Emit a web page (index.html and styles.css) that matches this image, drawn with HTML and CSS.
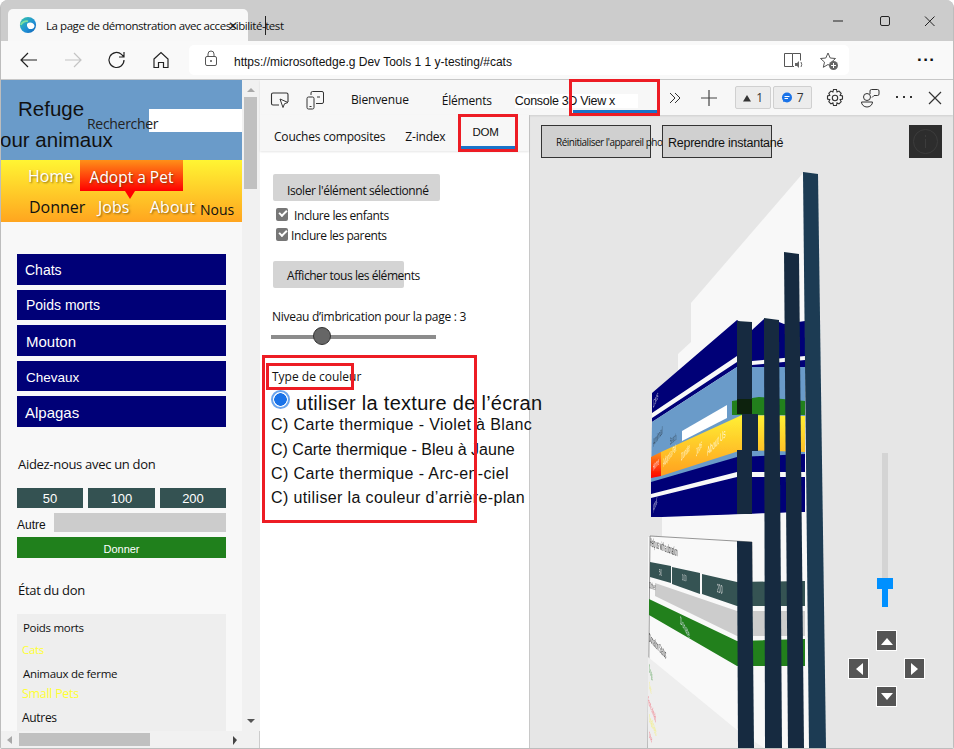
FILE: index.html
```html
<!DOCTYPE html>
<html lang="fr">
<head>
<meta charset="utf-8">
<title>3D View</title>
<link rel="stylesheet" href="styles.css">
</head>
<body>
<div class="window">
  <div class="tabstrip">
    <div class="tab">
      <svg class="edge" viewBox="0 0 20 20" width="18" height="18"><defs><linearGradient id="eg" x1="0" y1="0" x2="1" y2="1"><stop offset="0" stop-color="#37c6a8"/><stop offset="0.6" stop-color="#1f8fd6"/><stop offset="1" stop-color="#0f5fb0"/></linearGradient></defs><circle cx="10" cy="10" r="9" fill="url(#eg)"/><path d="M9 8.500c3-2.500 7-1 8 1.500 1 3-2 5-4.500 4.500-3-.5-4-3.500-3.500-6z" fill="#fff"/><path d="M2 10c1-3 5-5 8-4" stroke="#7fe0a0" stroke-width="2" fill="none"/></svg>
      <span class="tab-title">La page de démonstration avec accessibilité-test</span>
      <span class="tab-close">✕</span>
    </div>
    <i class="tab-caret"></i>
    <div class="win-controls">
      <svg viewBox="0 0 120 20" width="120" height="20"><path d="M1 11h10" stroke="#222" fill="none"/><rect x="48.500" y="6.500" width="9" height="9" rx="1.500" stroke="#222" fill="none"/><path d="M93 6.500l9.500 9.500M102.500 6.500l-9.500 9.500" stroke="#222" fill="none"/></svg>
    </div>
  </div>
  <div class="toolbar">
    <button class="tb-btn tb-back"><svg viewBox="0 0 20 20" width="20" height="20"><path d="M18 10H2M9 3l-7 7 7 7" stroke="#222" stroke-width="1.200" fill="none"/></svg></button>
    <button class="tb-btn"><svg viewBox="0 0 20 20" width="20" height="20"><path d="M2 10h16M11 3l7 7-7 7" stroke="#c4c4c4" stroke-width="1.200" fill="none"/></svg></button>
    <button class="tb-btn"><svg viewBox="0 0 20 20" width="20" height="20"><path d="M17 10a7.500 7.500 0 1 1-2.500-5.600L17 7M17 2v5h-5" stroke="#222" stroke-width="1.200" fill="none"/></svg></button>
    <button class="tb-btn"><svg viewBox="0 0 20 20" width="20" height="20"><path d="M3 9l7-6.500L17 9v8.500h-4.500v-5h-5v5H3z" stroke="#222" stroke-width="1.200" fill="none"/></svg></button>
    <div class="address">
      <svg class="lock" viewBox="0 0 16 16" width="16" height="16"><rect x="2.500" y="6.500" width="11" height="9" rx="1.500" stroke="#555" fill="none"/><path d="M5 6.500V4a3 3 0 0 1 6 0v2.500" stroke="#555" fill="none"/><circle cx="8" cy="11" r="1" fill="#555"/></svg>
      <span class="url">https://microsoftedge.g Dev Tools 1 1 y-testing/#cats</span>
      <svg class="read" viewBox="0 0 20 18" width="20" height="18"><path d="M9.500 1.500h-8v13h8zM9.500 1.500h8v7M11 14.500h-1.500" stroke="#555" fill="none"/><path d="M12 11h2l2-2v7l-2-2h-2z" fill="#666"/><path d="M18 10q1.500 2.500 0 5" stroke="#666" fill="none"/></svg>
      <svg class="fav" viewBox="0 0 20 20" width="20" height="20"><path d="M9 2l2.200 5 5.300.5-4 3.600 1.200 5.200L9 13.500l-4.700 2.800 1.200-5.200-4-3.600 5.300-.5z" stroke="#555" fill="none"/><circle cx="14.500" cy="14.500" r="4.500" fill="#666"/><path d="M14.500 12v5M12 14.500h5" stroke="#fff"/></svg>
    </div>
    <span class="tb-more">···</span>
  </div>

  <div class="content">
    <div class="page">
      <div class="page-view">
        <header class="site-head">
          <h1 class="site-title"><span class="t1">Refuge</span><span class="t2">our animaux</span></h1>
          <div class="search"><label class="search-label">Rechercher</label><span class="search-box"></span></div>
        </header>
        <nav class="site-nav">
          <div class="nav-row"><a class="nl home">Home</a><a class="nl adopt">Adopt a Pet</a></div>
          <div class="nav-row row2"><a class="nl dark donner">Donner</a><a class="nl jobs">Jobs</a><a class="nl about">About</a><a class="nl dark nous">Nous</a></div>
        </nav>
        <aside class="sidebar">
          <ul class="menu">
            <li class="m-a">Chats</li>
            <li class="m-b">Poids morts</li>
            <li class="m-c">Mouton</li>
            <li class="m-d">Chevaux</li>
            <li class="m-e">Alpagas</li>
          </ul>
          <h2 class="help">Aidez-nous avec un don</h2>
          <div class="amounts"><span>50</span><span>100</span><span>200</span></div>
          <div class="other"><span>Autre</span><i></i></div>
          <div class="donate">Donner</div>
          <h2 class="status">État du don</h2>
          <div class="stats">
            <p class="s1">Poids morts</p>
            <p class="s2">Cats</p>
            <p class="s3">Animaux de ferme</p>
            <p class="s4">Small Pets</p>
            <p class="s5">Autres</p>
          </div>
        </aside>
      </div>
      <div class="vscroll"><svg viewBox="0 0 18 651" width="18" height="651"><path d="M9 8l4 4H5z" fill="#a8a8a8"/><rect x="2" y="17" width="13" height="92" fill="#c0c0c0"/><path d="M5 639h8l-4 4z" fill="#555"/></svg></div>
      <div class="hscroll"><svg viewBox="0 0 242 18" width="242" height="18"><path d="M6 9l5-4v8z" fill="#a8a8a8"/><rect x="18" y="2" width="131" height="13" fill="#c0c0c0"/><path d="M236 9l-4-4v9z" fill="#444"/></svg></div>
    </div>

    <div class="devtools">
      <div class="dt-tabs">
        <svg class="dt-i1" viewBox="0 0 20 20" width="20" height="20"><path d="M9 15H3a1.500 1.500 0 0 1-1.500-1.500v-9A1.500 1.500 0 0 1 3 3h13.500A1.500 1.500 0 0 1 18 4.500V12" stroke="#333" stroke-width="1.100" fill="none"/><path d="M10 9l8 3.500-3.500 1.200-1.500 3.800z" fill="#fff" stroke="#333"/></svg>
        <svg class="dt-i2" viewBox="0 0 20 20" width="20" height="20"><rect x="2" y="7" width="7" height="12" rx="1.500" stroke="#333" fill="none"/><path d="M6 5V3a1.500 1.500 0 0 1 1.500-1.500H17A1.500 1.500 0 0 1 18.500 3v9a1.500 1.500 0 0 1-1.500 1.500h-6M12 7h3" stroke="#333" fill="none"/><path d="M4.500 16.500h2" stroke="#333"/></svg>
        <span class="dt-t bien">Bienvenue</span>
        <span class="dt-t elem">Éléments</span>
        <span class="dt-t cons">Console 3D View x</span>
        <svg class="dt-chev" viewBox="0 0 14 14" width="14" height="14"><path d="M2 2l5 5-5 5M7 2l5 5-5 5" stroke="#333" fill="none"/></svg>
        <svg class="dt-plus" viewBox="0 0 18 18" width="18" height="18"><path d="M9 1v16M1 9h16" stroke="#444" stroke-width="1.200"/></svg>
        <span class="badge b1"><svg viewBox="0 0 10 10" width="10" height="10"><path d="M5 2l4 6.500H1z" fill="#333"/></svg>1</span>
        <span class="badge b2"><svg viewBox="0 0 12 12" width="12" height="12"><circle cx="6" cy="5.500" r="5" fill="#1a73e8"/><path d="M2 10l1-3 2 2z" fill="#1a73e8"/><path d="M3.500 4.500h5M3.500 6.500h3.500" stroke="#fff"/></svg>7</span>
        <svg class="dt-gear" viewBox="0 0 20 20" width="20" height="20"><path d="M8.500 1.500h3l.5 2.500 2-.9 2.200 2.200-1.100 2 2.400.7v3l-2.400.7 1.100 2-2.200 2.200-2-1-.5 2.600h-3l-.6-2.600-2 1-2.100-2.200 1-2-2.300-.7V8l2.300-.7-1-2 2.100-2.200 2 .9z" stroke="#333" stroke-width="1.100" fill="none"/><circle cx="10" cy="10" r="2.700" stroke="#333" stroke-width="1.100" fill="none"/></svg>
        <svg class="dt-ppl" viewBox="0 0 20 20" width="20" height="20"><circle cx="7" cy="9" r="3.500" stroke="#333" fill="none"/><path d="M1.500 14h11a5.500 5 0 0 1-11 0z" stroke="#333" fill="none"/><path d="M10 6V3a1.500 1.500 0 0 1 1.500-1.500h6A1.500 1.500 0 0 1 19 3v3a1.500 1.500 0 0 1-1.500 1.500H14l-2 2" stroke="#333" fill="none"/></svg>
        <svg class="dt-dots" viewBox="0 0 18 4" width="18" height="4"><path d="M1 1h2M8 1h2M15 1h2" stroke="#333" stroke-width="2"/></svg>
        <svg class="dt-x" viewBox="0 0 14 14" width="14" height="14"><path d="M1 1l12 12M13 1L1 13" stroke="#333" stroke-width="1.200"/></svg>
      </div>
      <div class="dt-body">
        <section class="panel">
          <div class="subtabs">
            <span class="st st1">Couches composites</span>
            <span class="st st2">Z-index</span>
            <span class="st st3">DOM</span>
          </div>
          <div class="panel-body">
            <button class="pbtn isolate">Isoler l'élément sélectionné</button>
            <label class="chk c1"><i class="cb"></i><span>Inclure les enfants</span></label>
            <label class="chk c2"><i class="cb"></i><span>Inclure les parents</span></label>
            <button class="pbtn showall">Afficher tous les éléments</button>
            <div class="nest">Niveau d’imbrication pour la page : 3</div>
            <div class="range"><i></i></div>
            <div class="ctype">Type de couleur</div>
            <div class="radio r0"><i></i><span>utiliser la texture de l’écran</span></div>
            <div class="radio r1">C) Carte thermique - Violet à Blanc</div>
            <div class="radio r2">C) Carte thermique - Bleu à Jaune</div>
            <div class="radio r3">C) Carte thermique - Arc-en-ciel</div>
            <div class="radio r4">C) utiliser la couleur d’arrière-plan</div>
          </div>
        </section>
        <section class="stage">
          <svg class="scene" viewBox="530 116 424 633" width="424" height="633">
            <defs>
              <linearGradient id="yg" x1="0" y1="0" x2="0" y2="1"><stop offset="0" stop-color="#fff033"/><stop offset="1" stop-color="#ffa020"/></linearGradient>
              <linearGradient id="rg" x1="0" y1="0" x2="0" y2="1"><stop offset="0" stop-color="#ff9018"/><stop offset="1" stop-color="#f00"/></linearGradient>
              <filter id="sf"><feGaussianBlur stdDeviation="0.350"/></filter>
            </defs>
            <g filter="url(#sf)">
              <polygon points="805,173 692,304 692,343 679,355 679,400 664,420 663,537 649,538 649,749 812,749 806,380" fill="#f8f8f8"/>
              <polygon points="653,394 738,321 753,331 765,320 780,323 785,325 806,322 806,368 738,368 653,423" fill="#000077"/>
              <polygon points="653,414 738,357 753,362 806,357 806,361 753,366 738,363 653,419" fill="#f8f8f8"/>
              <polygon points="653,423 738,368 806,368 806,460 652,484" fill="#6a9bc9"/>
              <polygon points="733,402 760,398 806,402 806,416 733,416" fill="#20801c"/>
              <polygon points="683,432 728,406 728,419 683,442" fill="#fff"/>
              <polygon points="662,453 743,416 806,417 806,453 743,451 662,477" fill="url(#yg)"/>
              <polygon points="652,458 662,453 662,477 652,479" fill="url(#rg)"/>
              <polygon points="652,483 738,458 806,455 806,513 680,518 652,518" fill="#000077"/>
              <polygon points="652,495 738,473 806,473 806,478 738,478 652,499" fill="#f8f8f8"/>
              <polygon points="663,518 806,513 812,749 663,749" fill="#f8f8f8"/>
              <polygon points="651,537 753,543 753,749 649,749" fill="#f9f9f9" stroke="#333" stroke-width="0.500"/>
              <polygon points="651,563 672,567 672,584 651,578" fill="#345252"/>
              <polygon points="673,568 701,574 701,595 673,585" fill="#345252"/>
              <polygon points="703,575 738,583 806,582 806,607 738,607 703,595" fill="#345252"/>
              <polygon points="656,584 738,612 806,612 806,637 738,637 656,597" fill="#ccc"/>
              <polygon points="650,600 738,642 806,640 806,667 738,667 650,616" fill="#20801c"/>
              <polygon points="649,658 738,731 765,749 649,749" fill="#eee"/>
              <text class="t3d" transform="matrix(0.23,-0.5,0,1,654,410)" fill="#ccd">Cats</text>
              <text class="t3d" transform="matrix(0.28,-0.4,0,1,654,448)" fill="#345">Animal</text>
              <text class="t3d" transform="matrix(0.18,-0.15,0,0.9,671,446)" fill="#345">Search</text>
              <text class="t3d" transform="matrix(0.2,-0.24,0,0.9,654,472)" fill="#fdd">Home</text>
              <text class="t3d" transform="matrix(0.23,-0.28,0,1,664,468)" fill="#fff6d0">Adopt a Pet</text>
              <text class="t3d" transform="matrix(0.25,-0.3,0,1,682,462)" fill="#fff6d0">Donate</text>
              <text class="t3d" transform="matrix(0.25,-0.45,0,1,697,458)" fill="#fff6d0">Jobs</text>
              <text class="t3d" transform="matrix(0.41,-0.43,0,1.100,708,457)" fill="#fff6d0">About Us</text>
              <text class="t3d" transform="matrix(0.15,-0.36,0,1,654,514)" fill="#dde">About</text>
              <text class="t3d" transform="matrix(0.24,0.09,0,1.100,651,547)" fill="#222">Help us with a donation</text>
              <text class="t3d s" transform="matrix(0.3,0.1,0,1,660,576)" fill="#ddd">50</text>
              <text class="t3d s" transform="matrix(0.3,0.1,0,1,683,581)" fill="#ddd">100</text>
              <text class="t3d" transform="matrix(0.3,0.1,0,1.100,718,593)" fill="#ddd">200</text>
              <text class="t3d s" transform="matrix(0.3,0.1,0,1,650,589)" fill="#444">Other</text>
              <text class="t3d" transform="matrix(0.27,0.45,0,1,681,624)" fill="#dde">Donate</text>
              <text class="t3d" transform="matrix(0.22,0.23,0,1.100,650,642)" fill="#222">Donation Status</text>
              <text class="t3d" transform="matrix(0.14,0.4,0,1,650,672)" fill="#4a9a4a">Dogs</text>
              <text class="t3d s" transform="matrix(0.12,0.4,0,1,650,688)" fill="#f4f06a">Cats</text>
              <text class="t3d" transform="matrix(0.12,0.3,0,1,649,704)" fill="#f06070">Farm animals</text>
              <text class="t3d" transform="matrix(0.14,0.3,0,1,650,722)" fill="#f4f06a">Small Pets</text>
              <text class="t3d s" transform="matrix(0.14,0.3,0,1,650,738)" fill="#f06070">Other</text>
              <polygon points="738,322 753,323 753,400 738,400" fill="#162c40"/>
              <rect x="738" y="400" width="15" height="15" fill="#0a2010"/>
              <polygon points="743,415 759,415 759,452 753,452 753,515 738,515 738,451 743,451" fill="#162c40"/>
              <polygon points="738,542 753,543 755,749 739,749" fill="#162c40"/>
              <polygon points="765,319 780,321 783,749 766,749" fill="#162c40"/>
              <polygon points="785,253 800,255 805,749 789,749" fill="#162c40"/>
              <polygon points="804,173 819,175 827,749 810,749" fill="#1a3a52"/>
            </g>
          </svg>
          <div class="stage-top">
            <button class="sbtn reset"><span>Réinitialiser l'appareil photo</span></button>
            <button class="sbtn snap"><span>Reprendre instantané</span></button>
            <div class="info"><svg viewBox="0 0 33 33" width="33" height="33"><circle cx="16.500" cy="16.500" r="12" stroke="#3c3c3c" fill="none"/><path d="M16.500 14v9M16.500 10v2" stroke="#3c3c3c"/></svg></div>
          </div>
          <div class="zoomer"><div class="ztrack"></div><div class="zthumb"></div><div class="zfill"></div></div>
          <div class="pad">
            <span class="pb up"><svg viewBox="0 0 20 20" width="20" height="20"><path d="M4 14l6-7 6 7z" fill="#fff"/></svg></span>
            <span class="pb left"><svg viewBox="0 0 20 20" width="20" height="20"><path d="M14 4l-7 6 7 6z" fill="#fff"/></svg></span>
            <span class="pb right"><svg viewBox="0 0 20 20" width="20" height="20"><path d="M6 4l7 6-7 6z" fill="#fff"/></svg></span>
            <span class="pb down"><svg viewBox="0 0 20 20" width="20" height="20"><path d="M4 6l6 7 6-7z" fill="#fff"/></svg></span>
          </div>
        </section>
      </div>
      <i class="hl hl-view"></i>
      <i class="hl hl-dom"></i>
      <i class="hl hl-group"></i>
      <i class="hl hl-type"></i>
    </div>
  </div>
</div>
</body>
</html>
```

FILE: styles.css
```css
* { box-sizing: border-box; }
html, body { margin: 0; height: 100%; background: #fff; overflow: hidden; }
body { font-family: "Liberation Sans", Arial, sans-serif; color: #111; }
button { font: inherit; border: 0; padding: 0; background: none; color: inherit; }
p, h1, h2, ul { margin: 0; padding: 0; }

.window { width: 954px; height: 749px; display: flex; flex-direction: column; border: 1px solid #bdbdbd; border-top: 0; border-radius: 8px 8px 2px 2px; overflow: hidden; background: #ccc; }

/* tab strip */
.tabstrip { height: 41px; flex: none; display: flex; background: #ccc; padding: 9px 0 0 7px; position: relative; }
.tab { width: 240px; height: 32px; background: #f8f8f8; border-radius: 5px 5px 0 0; display: flex; align-items: center; padding-left: 11px; position: relative; font-family: "Open Sans", sans-serif; white-space: nowrap; }
.edge { flex: none; }
.tab-title { font-size: 11.500px; margin-left: 9px; letter-spacing: -0.440px; width: 0; color: #111; }
.tab-close { position: absolute; left: 220px; top: 8px; font-size: 12px; color: #222; }
.tab-caret { width: 1px; height: 19px; background: #222; margin: 7px 0 0 17px; flex: none; }
.win-controls { margin-left: auto; margin-right: 1px; margin-top: 1px; }

/* toolbar */
.toolbar { height: 39px; flex: none; background: #f9f9f9; border-bottom: 1px solid #c8c8c8; display: flex; align-items: center; padding: 0 0 1px 18px; }
.tb-btn { width: 44px; height: 24px; display: flex; align-items: center; padding-left: 0; flex: none; }
.tb-back { width: 44px; }
.address { width: 660px; height: 30px; margin-left: -6px; background: #fff; border-radius: 5px; display: flex; align-items: center; padding-left: 14px; position: relative; flex: none; }
.url { font-size: 12px; margin-left: 15px; margin-top: 5px; }
.read { margin-left: auto; margin-right: -3px; margin-top: 2px; }
.fav { margin-left: 19px; margin-right: 10px; margin-top: 2px; }
.lock { flex: none; margin-top: -3px; }
.tb-more { font-size: 17px; font-weight: 700; margin-left: 68px; letter-spacing: 0.500px; line-height: 1; }

/* content */
.content { flex: 1; display: flex; min-height: 0; }
.page { width: 259px; flex: none; display: grid; grid-template-columns: 241px 18px; grid-template-rows: 651px 18px; background: #f1f1f1; border-right: 1px solid #ccc; }
.page-view { overflow: hidden; background: #f8f8f8; }
.vscroll { background: #f1f1f1; line-height: 0; }
.hscroll { background: #f1f1f1; line-height: 0; }

.site-head { height: 80px; background: #6a9bc9; display: grid; position: relative; }
.site-title { grid-area: 1 / 1; font-weight: 400; font-size: 20.500px; line-height: 32px; padding-top: 13px; }
.t1 { display: block; padding-left: 17px; }
.t2 { display: block; margin-left: -1px; margin-top: -1px; }
.search { grid-area: 1 / 1; display: flex; margin: 29px 0 0 86px; height: 23px; font-size: 15px; }
.search-label { line-height: 29px; width: 62px; white-space: nowrap; font-family: "Open Sans", sans-serif; font-size: 14px; letter-spacing: -0.300px; position: relative; z-index: 1; color: #222; }
.search-box { flex: 1; background: #fff; }

.site-nav { height: 62px; background: linear-gradient(#fff533, #ffa51f); font-size: 16px; font-family: "Open Sans", sans-serif; position: relative; }
.nav-row { display: flex; height: 31px; }
.nl { color: #fff; text-shadow: 1px 1px 2px rgba(90,60,0,.7); line-height: 33px; }
.home { margin-left: 27px; width: 52px; }
.adopt { width: 103px; background: linear-gradient(#ff9018, #f00); text-align: center; line-height: 34px; position: relative; font-size: 15.500px; }
.adopt::after { content: ""; position: absolute; left: 45px; top: 31px; border: 5px solid transparent; border-top: 8px solid #f00; border-bottom: 0; }
.row2 { font-size: 16px; }
.dark { color: #111; text-shadow: none; }
.row2 .nl { line-height: 33px; }
.donner { margin-left: 28px; width: 69px; }
.jobs { width: 52px; }
.about { width: 50px; }
.row2 .nous { font-size: 14px; line-height: 37px; }

.sidebar { padding: 32px 16px 0; }
.menu { list-style: none; height: 173px; display: flex; flex-direction: column; gap: 5px; }
.menu li { background: #000077; color: #fff; padding-left: 9px; display: flex; align-items: center; }
.m-a { height: 31px; font-size: 14px; padding-left: 8px !important; }
.m-b { height: 30px; font-size: 14px; padding-bottom: 1px; }
.m-c { height: 31px; font-size: 15px; padding-top: 2px; }
.m-d { height: 30px; font-size: 13.500px; padding-top: 2px; }
.m-e { height: 31px; font-size: 15px; padding-left: 8px !important; padding-top: 2px; }
.help { font-size: 13px; font-weight: 400; font-family: "Open Sans", sans-serif; letter-spacing: -0.300px; margin: 27px 0 0 1px; line-height: 20px; }
.amounts { display: grid; grid-template-columns: 66px 67px 66px; gap: 5px; margin-top: 14px; }
.amounts span { height: 20px; background: #345252; color: #fff; text-align: center; font-size: 13px; line-height: 22px; }
.other { display: flex; height: 19px; margin-top: 5px; font-size: 12px; gap: 3px; }
.other span { width: 34px; line-height: 25px; }
.other i { flex: 1; background: #ccc; }
.donate { height: 21px; margin-top: 5px; background: #20801c; color: #fff; text-align: center; font-size: 11px; line-height: 25px; }
.status { font-size: 13px; font-weight: 400; margin: 22px 0 0 1px; line-height: 20px; font-family: "Open Sans", sans-serif; letter-spacing: -0.300px; }
.stats { height: 118px; margin-top: 14px; background: #eee; padding: 6px 5px; font-size: 11.500px; font-family: "Open Sans", sans-serif; letter-spacing: -0.300px; }
.stats p { line-height: 16px; }
.s1 { margin-left: 1px; }
.s2 { color: #ffff33; margin-top: 6px; }
.s3 { margin: 8px 0 0 1px; }
.s4 { color: #ffff33; margin-top: 4px; font-size: 12.500px; }
.s5 { margin-top: 8px; font-size: 12px; }

/* devtools */
.devtools { flex: 1; display: flex; flex-direction: column; position: relative; min-width: 0; background: #f7f7f7; }
.dt-tabs { height: 35px; flex: none; display: flex; align-items: center; background: #f7f7f7; box-shadow: 0 1px 2px rgba(0,0,0,.1); position: relative; z-index: 1; font-size: 12.500px; font-family: "Open Sans", sans-serif; padding-left: 10px; }
.dt-i1 { margin-top: 5px; }
.dt-i2 { margin-left: 15px; margin-top: 5px; }
.dt-t { white-space: nowrap; letter-spacing: -0.300px; }
.bien { margin-left: 26px; margin-top: 3px; font-size: 12px; letter-spacing: -0.150px; }
.elem { margin-left: 33px; margin-top: 6px; font-size: 12px; letter-spacing: -0.200px; }
.cons { margin-left: 23px; margin-top: 6px; background: #fff; font-size: 12.500px; width: 123px; letter-spacing: -0.300px; font-family: "Liberation Sans", sans-serif; }
.dt-chev { margin-left: 30px; }
.dt-plus { margin-left: 18px; }
.badge { height: 23px; border: 1px solid #d0d0d0; border-radius: 2px; background: #ececec; display: flex; align-items: center; justify-content: center; gap: 4px; font-size: 12px; color: #333; }
.b1 { width: 36px; margin-left: 17px; }
.b2 { width: 39px; margin-left: 2px; }
.dt-gear { margin-left: 13px; }
.dt-ppl { margin-left: 15px; }
.dt-dots { margin-left: 15px; }
.dt-x { margin-left: 15px; }

.dt-body { flex: 1; display: flex; min-height: 0; }
.panel { width: 270px; flex: none; background: #fff; border-right: 1px solid #c8c8c8; display: flex; flex-direction: column; position: relative; z-index: 1; }
.subtabs { height: 36px; flex: none; background: #f7f7f7; box-shadow: 0 1px 2px rgba(0,0,0,.1); display: flex; align-items: flex-start; font-size: 12px; font-family: "Open Sans", sans-serif; letter-spacing: -0.200px; padding: 13px 0 0 14px; }
.st { white-space: nowrap; }
.st2 { margin-left: 20px; }
.st3 { margin-left: 27px; margin-top: -2px; font-family: "Liberation Sans", sans-serif; font-size: 11.500px; }
.panel-body { padding: 23px 0 0 11px; font-size: 12px; font-family: "Open Sans", sans-serif; letter-spacing: -0.400px; }
.pbtn { display: block; height: 27px; background: #d4d4d4; border-radius: 2px; text-align: left; padding: 5px 0 0 14px; margin-left: 2px; white-space: nowrap; font-size: 12px; letter-spacing: -0.400px; }
.isolate { width: 167px; }
.showall { width: 131px; margin-top: 17px; letter-spacing: -0.450px; padding-top: 2px; }
.chk { display: flex; align-items: center; height: 20px; white-space: nowrap; }
.cb { width: 12px; height: 13px; border-radius: 2px; background: #777; margin-left: 5px; flex: none; position: relative; }
.cb::after { content: ""; position: absolute; left: 3px; top: 2px; width: 6px; height: 3px; border: solid #fff; border-width: 0 0 2px 2px; transform: rotate(-45deg); }
.c1 { margin-top: 3px; }
.c1 span { margin: 3px 0 0 6px; }
.c2 span { margin: 3px 0 0 3px; }
.nest { margin: 21px 0 0 1px; line-height: 16px; white-space: nowrap; letter-spacing: -0.280px; }
.range { width: 165px; height: 4px; background: #8c8c8c; margin-top: 10px; position: relative; }
.range i { position: absolute; left: 42px; top: -8px; width: 18px; height: 18px; border-radius: 50%; background: #666; border: 1px solid #333; }
.ctype { margin: 30px 0 0 1px; line-height: 16px; font-size: 12px; letter-spacing: 0; }
.radio { font-family: "Liberation Sans", sans-serif; white-space: nowrap; font-size: 16px; height: 24px; line-height: 24px; letter-spacing: 0.380px; }
.r0 { display: flex; align-items: center; font-size: 20px; height: 26px; letter-spacing: 0.280px; margin-top: 1px; }
.r0 span { margin-top: 7px; }
.r0 i { width: 19px; height: 19px; border-radius: 50%; border: 2px solid #6aa5ee; background: radial-gradient(circle, #1a73e8 0 6px, #fff 6.500px); flex: none; margin-right: 6px; }
.r1 { margin-top: 1px; }
.r2 { letter-spacing: 0; margin-top: 1px; }

.stage { flex: 1; position: relative; background: #e6e6e6; min-width: 0; overflow: hidden; }
.scene { position: absolute; left: -1px; top: 0; display: block; }
.t3d { font-size: 11px; font-family: "Liberation Sans", sans-serif; }
.t3d.s { font-size: 9px; }
.stage-top { position: relative; display: flex; align-items: flex-start; padding: 10px 11px 0 11px; }
.sbtn { width: 110px; height: 33px; background: #d0d0d0; border: 1px solid #333; text-align: left; white-space: nowrap; flex: none; font-family: "Open Sans", sans-serif; }
.reset { font-size: 10px; padding-left: 14px; letter-spacing: -0.500px; }
.snap { font-size: 12.500px; margin-left: 11px; padding: 2px 0 0 5px; font-family: "Liberation Sans", sans-serif; letter-spacing: -0.250px; }
.info { width: 33px; height: 33px; background: #2d2d2d; margin-left: auto; line-height: 0; }
.zoomer { position: absolute; left: 347px; top: 338px; width: 16px; height: 154px; }
.ztrack { position: absolute; left: 5px; top: 0; width: 6px; height: 126px; background: #d4d4d4; }
.zthumb { position: absolute; left: 0; top: 125px; width: 16px; height: 11px; background: #0090ff; }
.zfill { position: absolute; left: 5px; top: 136px; width: 6px; height: 18px; background: #0090ff; }
.pad { position: absolute; left: 318px; top: 515px; display: grid; grid-template-columns: repeat(3, 21px); grid-template-rows: repeat(3, 21px); gap: 7px; }
.pb { width: 21px; height: 21px; background: #555; border: 1px solid #fff; display: flex; align-items: center; justify-content: center; }
.pb svg { flex: none; }
.up { grid-area: 1 / 2; }
.left { grid-area: 2 / 1; }
.right { grid-area: 2 / 3; }
.down { grid-area: 3 / 2; }

/* red call-out boxes */
.hl { position: absolute; border: 3px solid #ed1c24; z-index: 3; pointer-events: none; }
.hl-view { left: 309px; top: -1px; width: 91px; height: 37px; }
.hl-dom { left: 198px; top: 34px; width: 60px; height: 38px; }
.hl-group { left: 2px; top: 275px; width: 215px; height: 168px; }
.hl-type { left: 6px; top: 283px; width: 88px; height: 27px; }
.hl-view::after, .hl-dom::after { content: ""; position: absolute; background: #1a73c8; height: 3px; }
.hl-view::after { left: 1px; right: 0; bottom: 0; }
.hl-dom::after { left: 0; right: 0; bottom: 0; }
```
